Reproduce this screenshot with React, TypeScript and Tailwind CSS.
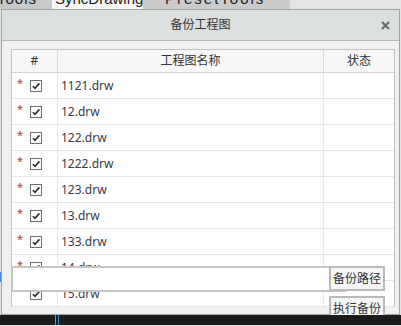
import React from "react";

const rows = ["1121.drw", "12.drw", "122.drw", "1222.drw", "123.drw", "13.drw", "133.drw", "14.drw", "15.drw"];

function Check() {
  return (
    <span className="flex h-[12px] w-[12px] items-center justify-center border border-[#6e6e6e] bg-white">
      <svg width="10" height="10" viewBox="0 0 10 10">
        <path d="M1.8 5.2 L4 7.4 L8.4 2.4" fill="none" stroke="#2e2e2e" strokeWidth="1.6" />
      </svg>
    </span>
  );
}

export default function App() {
  return (
    <div className="relative flex h-[326px] w-[401px] flex-col overflow-hidden bg-[#e2e2e2] font-['Noto_Sans','Noto_Sans_CJK_SC',sans-serif] text-[#333]">
      {/* top tabs strip (cut off) */}
      <div className="flex h-[9px] shrink-0 overflow-hidden font-['Liberation_Sans',sans-serif] text-[15px] leading-[15px] text-[#222]">
        <div className="w-[52px] bg-[#c9c9c9]">
          <div className="-ml-[3px] -mt-[9px] whitespace-nowrap tracking-[1px]">Tools</div>
        </div>
        <div className="w-[91px] bg-[#f7f7f7]">
          <div className="-mt-[9px] whitespace-nowrap pl-[3px]">SyncDrawing</div>
        </div>
        <div className="w-[147px] bg-[#cbcbcb]">
          <div className="-mt-[9px] whitespace-nowrap pl-[22px] tracking-[2px]">PresetTools</div>
        </div>
        <div className="flex-1 bg-[#e4e4e4]" />
      </div>

      {/* dialog */}
      <div className="ml-[1px] flex w-[399px] flex-col border border-[#a3a3a3]">
        <div className="relative flex h-[31px] items-center justify-center border-b border-[#b5b5b5] bg-[#dcdfe0] text-[12px]">
          <span>备份工程图</span>
          <svg className="absolute right-[9px] top-[11px]" width="9" height="9" viewBox="0 0 9 9">
            <path d="M1 1 L8 8 M8 1 L1 8" stroke="#6b6b6b" strokeWidth="2.2" />
          </svg>
        </div>
        <div className="relative h-[273px] bg-[#f0f0f0] pl-[9px] pr-[4px] pt-[8px]">
          <div className="border border-b-0 border-[#c2c2c2] bg-white">
            <div className="flex h-[23px] border-b border-[#d2d2d2] bg-[#f7f7f7] text-[12px]">
              <div className="flex w-[46px] items-center justify-center border-r border-[#dadada]">#</div>
              <div className="flex w-[266px] items-center justify-center border-r border-[#dadada]">工程图名称</div>
              <div className="flex flex-1 items-center justify-center">状态</div>
            </div>
            {rows.map((r) => (
              <div key={r} className="flex h-[26px] border-b border-[#e6e6e6] text-[12px]">
                <div className="flex w-[46px] items-center border-r border-[#e8e8e8] pl-[5px]">
                  <span className="-mt-[4px] w-[13px] text-[11px] text-[#a83a3a]">*</span>
                  <Check />
                </div>
                <div className="flex w-[266px] items-center border-r border-[#e8e8e8] pl-[3px] text-[#3a3a44]">{r}</div>
                <div className="flex-1" />
              </div>
            ))}
          </div>

          {/* path input + buttons overlay */}
          <div className="absolute left-[9px] top-[225px] h-[26px] w-[335px] border-2 border-[#c6c6c6] bg-white" />
          <div className="absolute left-[327px] top-[225px] flex h-[25px] w-[56px] items-center justify-center border-2 border-[#bababa] bg-[#f6f6f6] text-[12px]">
            备份路径
          </div>
          <div className="absolute left-[327px] top-[255px] flex h-[25px] w-[56px] items-center justify-center border-2 border-[#bababa] bg-[#f6f6f6] text-[12px]">
            执行备份
          </div>
        </div>
      </div>

      {/* taskbar strip */}
      <div className="relative z-10 flex h-[10px] shrink-0 bg-[#1b1b1b]">
        <div className="ml-[55px] w-[1px] bg-[#8a8a8a]" />
        <div className="ml-[2px] w-[1px] bg-[#3a8ee6]" />
      </div>
      <div className="absolute left-0 top-[272px] h-[10px] w-[1px] bg-[#3a8ee6]" />
    </div>
  );
}
